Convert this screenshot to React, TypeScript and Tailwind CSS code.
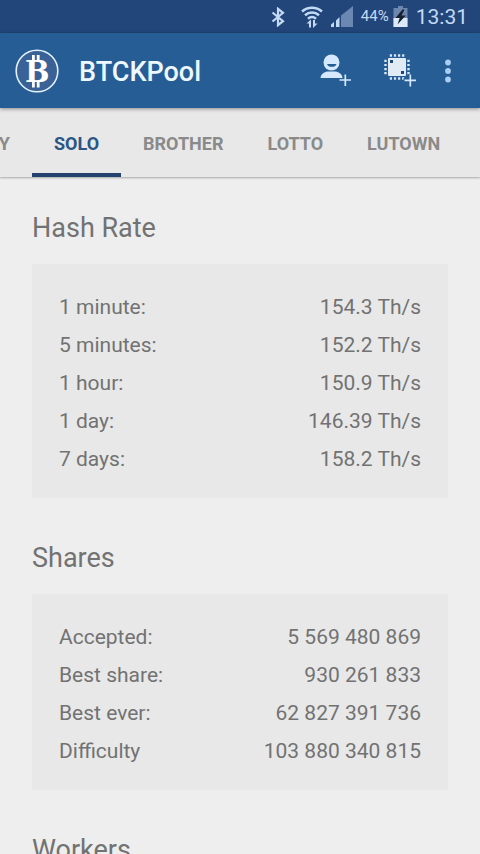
const tabs = ["SOLO", "BROTHER", "LOTTO", "LUTOWN"]

const hashRates = [
    { label: "1 minute:", value: "154.3 Th/s" },
    { label: "5 minutes:", value: "152.2 Th/s" },
    { label: "1 hour:", value: "150.9 Th/s" },
    { label: "1 day:", value: "146.39 Th/s" },
    { label: "7 days:", value: "158.2 Th/s" },
]

const shares = [
    { label: "Accepted:", value: "5 569 480 869" },
    { label: "Best share:", value: "930 261 833" },
    { label: "Best ever:", value: "62 827 391 736" },
    { label: "Difficulty", value: "103 880 340 815" },
]

function BluetoothIcon() {
    return (
        <svg width="14" height="20" viewBox="0 0 14 20" fill="none" stroke="currentColor" strokeWidth="2.2">
            <path d="M1.5 5.5 12 14.2 7 18.2V1.8l5 4L1.5 14.5" />
        </svg>
    )
}

function WifiIcon() {
    return (
        <svg width="22" height="22" viewBox="0 0 22 22" fill="none" stroke="currentColor" strokeWidth="2.5">
            <path d="M1 5.5C6.8.5 15.2.5 21 5.5" />
            <path d="M4 9.200c4.1-3.7 9.9-3.7 14 0" />
            <path d="M7 12.700c2.4-2.1 5.6-2.1 8 0" />
            <path d="M9 21.500v-6M13 14v6" strokeWidth="2" />
            <path d="m5.500 17.500 4.500-4v4zM16.500 17.500 12 22v-4.500z" fill="currentColor" stroke="none" />
        </svg>
    )
}

function SignalIcon() {
    return (
        <svg width="22" height="21" viewBox="0 0 22 21" fill="currentColor">
            <path d="M0 18.500 3 16v5H0zM5 14.500 8.500 11v10H5z" />
            <path d="M10 9.500 22 0v21H10z" opacity=".45" />
        </svg>
    )
}

function BatteryIcon() {
    return (
        <svg width="15" height="21" viewBox="0 0 15 21">
            <path d="M5 0h5v2h4.500v19H.5V2H5z" fill="#6c86ad" />
            <path d="M.5 12h14v9H.5z" fill="#dbe9f8" />
            <path d="m9.500 3.500-7 8.500h4.200l-2.200 6.500 8.200-9H8.500l3-6z" fill="#17202e" />
        </svg>
    )
}

function BitcoinLogo() {
    return (
        <svg width="44" height="44" viewBox="0 0 44 44" fill="#fff" aria-hidden="true">
            <circle cx="22" cy="22" r="20.800" fill="#3a6296" stroke="#e3f2fd" strokeWidth="1.600" />
            <path d="M17 6h2.800v7H17zM21.800 6h2.800v7h-2.800zM17 31.500h2.800v7H17zM21.800 31.500h2.800v7h-2.800z" />
            <text x="10" y="33" fontSize="29" fontWeight="700" fontFamily="DejaVu Serif, serif">
                B
            </text>
        </svg>
    )
}

function AddUserIcon() {
    return (
        <svg width="32" height="34" viewBox="0 0 32 34">
            <circle cx="11.500" cy="8.500" r="8" fill="#d6e8fb" />
            <path d="M7 10h9.500c-.8 3.800-8.700 3.800-9.500 0z" fill="#265d95" />
            <path d="M.5 24c.5-4 3.500-6 7-6.500h8c3.500.5 6.500 2.500 7 6.500z" fill="#d6e8fb" />
            <path d="M18 26h13M25.300 20v13" stroke="#265d95" strokeWidth="4" />
            <path d="M19.500 26H31M25.300 20.500v11.500" stroke="#d6e8fb" strokeWidth="1.700" />
        </svg>
    )
}

function AddMinerIcon() {
    return (
        <svg width="32" height="34" viewBox="0 0 32 34">
            <path
                d="M5.800 1.500h14.500M5.800 24.500h14.500"
                stroke="#d6e8fb"
                strokeWidth="2.400"
                strokeDasharray="2.200 1.900"
            />
            <path
                d="M1.500 5.800v14.500M24.500 5.800v14.500"
                stroke="#d6e8fb"
                strokeWidth="2.400"
                strokeDasharray="2.200 1.900"
            />
            <rect x="4" y="4" width="18" height="18" rx="1" fill="#e1ebf6" />
            <path d="M6 6h3v3H6zM17 17h3v3h-3z" fill="#1f4674" />
            <path d="M19.500 26.300H32M26.300 20v13" stroke="#265d95" strokeWidth="4" />
            <path d="M20.500 26.300H32M26.300 20.500v12" stroke="#d6e8fb" strokeWidth="1.700" />
        </svg>
    )
}

function StatusBar() {
    return (
        <div className="flex h-[33px] shrink-0 items-center justify-end bg-[#22457a] pr-3 text-[#c3daf5]">
            <BluetoothIcon />
            <div className="ml-4">
                <WifiIcon />
            </div>
            <div className="ml-2">
                <SignalIcon />
            </div>
            <span className="ml-2 text-[15px]">44%</span>
            <div className="ml-1">
                <BatteryIcon />
            </div>
            <span className="ml-2 pt-0.5 text-[21px]">13:31</span>
        </div>
    )
}

function StatCard({ title, rows }: { title: string; rows: { label: string; value: string }[] }) {
    return (
        <section className="mb-11">
            <h2 className="mb-5 text-[27px] leading-8">{title}</h2>
            <dl className="bg-[#e8e8e8] px-[27px] pt-[25px] pb-[19px]">
                {rows.map((row) => (
                    <div key={row.label} className="flex h-[38px] items-center justify-between">
                        <dt>{row.label}</dt>
                        <dd>{row.value}</dd>
                    </div>
                ))}
            </dl>
        </section>
    )
}

export default function App() {
    return (
        <div className="flex h-screen flex-col overflow-hidden bg-[#eeeeee] font-[Roboto,sans-serif] text-[#727272]">
            <StatusBar />
            <header className="z-10 flex h-[75px] shrink-0 items-center bg-[#265d95] pr-5 pl-[15px] shadow-[0_1px_4px_rgba(0,0,0,0.4)]">
                <BitcoinLogo />
                <h1 className="ml-5 flex-1 pt-1 text-[27px] font-medium text-[#eef8ff]">BTCKPool</h1>
                <button aria-label="Add user">
                    <AddUserIcon />
                </button>
                <button aria-label="Add miner" className="ml-8">
                    <AddMinerIcon />
                </button>
                <button aria-label="More options" className="ml-5 flex w-6 justify-center">
                    <svg width="6" height="24" viewBox="0 0 6 24" fill="#a9cdf3">
                        <circle cx="3" cy="3.500" r="2.900" />
                        <circle cx="3" cy="12" r="2.900" />
                        <circle cx="3" cy="20.500" r="2.900" />
                    </svg>
                </button>
            </header>
            <nav className="flex h-[69px] shrink-0 overflow-hidden bg-[#e8e8e8] text-lg font-bold text-[#8a8a8a] shadow-[0_1px_2px_rgba(0,0,0,0.3)]">
                <button className="flex w-8 shrink-0 items-center justify-end pt-0.5 pr-[22px]">Y</button>
                {tabs.map((tab) => (
                    <button
                        key={tab}
                        className={
                            tab === "SOLO"
                                ? "shrink-0 border-y-4 border-t-transparent border-b-[#25426f] px-[22px] pt-0.5 text-[#2a5585]"
                                : "shrink-0 px-[22px] pt-0.5"
                        }
                    >
                        {tab}
                    </button>
                ))}
            </nav>
            <main className="flex-1 overflow-y-auto px-8 pt-[35px] text-[21px] [scrollbar-width:none]">
                <StatCard title="Hash Rate" rows={hashRates} />
                <StatCard title="Shares" rows={shares} />
                <h2 className="text-[27px] leading-8">Workers</h2>
            </main>
        </div>
    )
}
